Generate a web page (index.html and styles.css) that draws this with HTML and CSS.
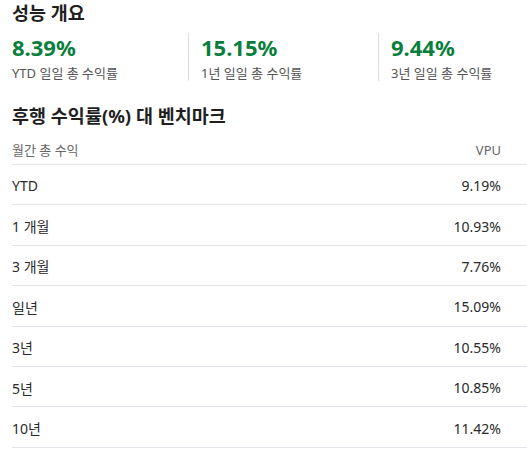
FILE: index.html
```html
<!DOCTYPE html>
<html lang="ko">

<head>
    <meta charset="UTF-8">
    <meta name="viewport" content="width=device-width, initial-scale=1.0">
    <title>성능 개요</title>
    <link rel="stylesheet" href="styles.css">
</head>

<body>

    <!-- 성능 개요 -->
    <section class="overview">
        <h2 class="section-title">성능 개요</h2>
        <div class="stats">
            <div class="stat">
                <div class="stat-value">8.39%</div>
                <div class="stat-label">YTD 일일 총 수익률</div>
            </div>
            <div class="stat">
                <div class="stat-value">15.15%</div>
                <div class="stat-label">1년 일일 총 수익률</div>
            </div>
            <div class="stat">
                <div class="stat-value">9.44%</div>
                <div class="stat-label">3년 일일 총 수익률</div>
            </div>
        </div>
    </section>

    <!-- 후행 수익률 -->
    <section class="trailing">
        <h2 class="section-title">후행 수익률(%) 대 벤치마크</h2>
        <table class="returns">
            <thead>
                <tr>
                    <th>월간 총 수익</th>
                    <th class="num">VPU</th>
                </tr>
            </thead>
            <tbody>
                <tr><td>YTD</td><td class="num">9.19%</td></tr>
                <tr><td>1 개월</td><td class="num">10.93%</td></tr>
                <tr><td>3 개월</td><td class="num">7.76%</td></tr>
                <tr><td>일년</td><td class="num">15.09%</td></tr>
                <tr><td>3년</td><td class="num">10.55%</td></tr>
                <tr><td>5년</td><td class="num">10.85%</td></tr>
                <tr><td>10년</td><td class="num">11.42%</td></tr>
            </tbody>
        </table>
    </section>

</body>

</html>
```

FILE: styles.css
```css
/* Estilos gerais */
body {
    font-family: 'Noto Sans', 'Noto Sans CJK KR', sans-serif;
    background-color: #fff;
    color: #222;
    margin: 0;
    padding: 1px 0 0 12px;
}

.section-title {
    font-size: 18.5px;
    font-weight: 700;
    line-height: 24px;
    color: #1f1f1f;
    margin: 0;
}

/* Cartões de desempenho */
.stats {
    display: flex;
    margin-top: 8px;
}

.stat {
    box-sizing: border-box;
    flex: 0 0 190px;
    min-width: 0;
}

.stat:first-child {
    flex-basis: 176px;
}

.stat:last-child {
    flex: 1 1 auto;
}

.stat + .stat {
    border-left: 1px solid #dcdcdc;
    padding-left: 12px;
}

.stat-value {
    font-size: 22px;
    font-weight: 700;
    line-height: 28px;
    color: #0a7f3d;
}

.stat-label {
    font-size: 13px;
    line-height: 16px;
    color: #555;
    margin-top: 4px;
}

/* Tabela de retornos */
.trailing {
    margin-top: 23px;
}

.returns {
    width: 100%;
    border-collapse: collapse;
    margin-top: 12px;
}

.returns th {
    font-size: 13px;
    font-weight: 400;
    color: #666;
    text-align: left;
    padding: 0 0 5px;
    border-bottom: 1px solid #e2e2e8;
}

.returns td {
    font-size: 14px;
    color: #2a2a2a;
    height: 37.4px;
    padding: 2px 0 0;
    border-bottom: 1px solid #e2e2e8;
}

.returns .num {
    text-align: right;
    padding-right: 26px;
}
```
